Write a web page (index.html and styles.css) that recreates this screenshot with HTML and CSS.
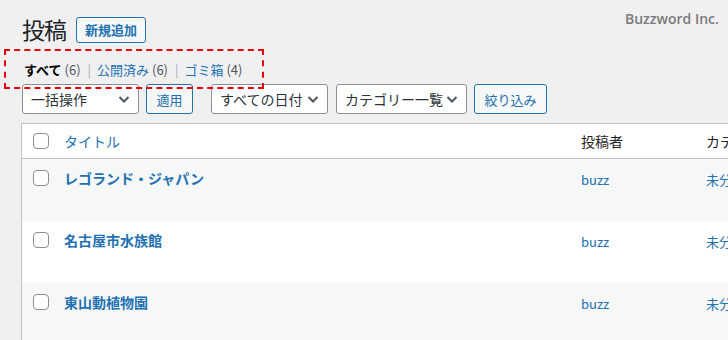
FILE: index.html
```html
<!DOCTYPE html>
<html lang="ja">
<head>
    <meta charset="UTF-8">
    <meta name="viewport" content="width=device-width, initial-scale=1.0">
    <title>投稿</title>
    <link rel="stylesheet" href="styles.css">
</head>
<body>
    <div class="wrap">
        <div class="brand">Buzzword Inc.</div>

        <div class="page-header">
            <h1>投稿</h1>
            <a class="btn btn-add" href="#">新規追加</a>
        </div>

        <ul class="subsubsub">
            <li><a class="current" href="#">すべて <span class="count">(6)</span></a><span class="sep">|</span></li>
            <li><a href="#">公開済み <span class="count">(6)</span></a><span class="sep">|</span></li>
            <li><a href="#">ゴミ箱 <span class="count">(4)</span></a></li>
        </ul>
        <div class="highlight"></div>

        <div class="tablenav">
            <div class="select sel-bulk">一括操作 <svg viewBox="0 0 16 16"><path d="M3.5 6 L8 10.5 L12.5 6"/></svg></div>
            <button class="btn btn-apply">適用</button>
            <div class="select sel-date">すべての日付 <svg viewBox="0 0 16 16"><path d="M3.5 6 L8 10.5 L12.5 6"/></svg></div>
            <div class="select sel-cat">カテゴリー一覧 <svg viewBox="0 0 16 16"><path d="M3.5 6 L8 10.5 L12.5 6"/></svg></div>
            <button class="btn btn-filter">絞り込み</button>
        </div>

        <table class="posts">
            <thead>
                <tr>
                    <th class="col-cb"><span class="checkbox"></span></th>
                    <th class="col-title"><a href="#">タイトル</a></th>
                    <th class="col-author">投稿者</th>
                    <th class="col-cat">カテゴリー</th>
                </tr>
            </thead>
            <tbody>
                <tr>
                    <td class="col-cb"><span class="checkbox"></span></td>
                    <td class="col-title"><a class="row-title" href="#">レゴランド・ジャパン</a></td>
                    <td class="col-author"><a href="#">buzz</a></td>
                    <td class="col-cat"><a href="#">未分類</a></td>
                </tr>
                <tr>
                    <td class="col-cb"><span class="checkbox"></span></td>
                    <td class="col-title"><a class="row-title" href="#">名古屋市水族館</a></td>
                    <td class="col-author"><a href="#">buzz</a></td>
                    <td class="col-cat"><a href="#">未分類</a></td>
                </tr>
                <tr>
                    <td class="col-cb"><span class="checkbox"></span></td>
                    <td class="col-title"><a class="row-title" href="#">東山動植物園</a></td>
                    <td class="col-author"><a href="#">buzz</a></td>
                    <td class="col-cat"><a href="#">未分類</a></td>
                </tr>
            </tbody>
        </table>
    </div>
</body>
</html>
```

FILE: styles.css
```css
body {
    margin: 0;
    background: #f0f0f1;
    color: #1d2327;
    font-family: "Noto Sans CJK JP", "Noto Sans", sans-serif;
    font-size: 13px;
    overflow: hidden;
}
a {
    color: #2271b1;
    text-decoration: none;
}
.wrap {
    position: relative;
    padding-left: 21px;
    width: 820px;
}
.brand {
    position: absolute;
    left: 625px;
    top: 9px;
    color: #7a7a7a;
    font-family: "Open Sans", sans-serif;
    font-size: 14px;
    font-weight: 600;
}
.page-header {
    display: flex;
    align-items: center;
    gap: 10px;
    padding-top: 16px;
    height: 27px;
}
.page-header h1 {
    margin: 0 0 0 1px;
    font-size: 23px;
    font-weight: 400;
    line-height: 27px;
    letter-spacing: -1px;
}
.btn {
    display: inline-flex;
    align-items: center;
    justify-content: center;
    box-sizing: border-box;
    height: 30px;
    padding: 0;
    border: 1px solid #2271b1;
    border-radius: 3px;
    background: #f6f7f7;
    color: #2271b1;
    font-family: inherit;
    font-size: 13px;
}
.btn-add {
    width: 70px;
    height: 26px;
    font-weight: 700;
}
.btn-apply { width: 47px; }
.btn-filter { width: 73px; }
.subsubsub {
    list-style: none;
    margin: 0;
    padding: 14px 0 0 3px;
    height: 29px;
    display: flex;
    color: #646970;
}
.subsubsub li {
    line-height: 26px;
}
.subsubsub a.current {
    color: #000;
    font-weight: 700;
}
.count {
    color: #50575e;
    font-weight: 400;
}
.sep {
    color: #a7aaad;
    margin: 0 6px 0 7px;
}
.highlight {
    position: absolute;
    left: 4px;
    top: 49px;
    width: 256px;
    height: 36px;
    border: 2px dashed #e8000b;
}
.tablenav {
    display: flex;
    align-items: center;
    height: 30px;
    margin-top: -2px;
    margin-left: 1px;
}
.select {
    display: flex;
    align-items: center;
    justify-content: space-between;
    box-sizing: border-box;
    height: 30px;
    padding: 0 6px 0 8px;
    border: 1px solid #8c8f94;
    border-radius: 3px;
    background: #fff;
    color: #2c3338;
    font-size: 14px;
    white-space: nowrap;
}
.select svg {
    width: 16px;
    height: 16px;
    fill: none;
    stroke: #50575e;
    stroke-width: 2;
}
.sel-bulk { width: 117px; margin-right: 7px; }
.sel-date { width: 117px; margin-left: 18px; margin-right: 8px; }
.sel-cat { width: 131px; margin-right: 7px; }
.posts {
    margin-top: 9px;
    width: 790px;
    table-layout: fixed;
    border-collapse: collapse;
    border: 1px solid #c3c4c7;
    background: #fff;
    white-space: nowrap;
}
.posts th, .posts td {
    text-align: left;
    vertical-align: top;
    padding: 0 8px;
    overflow: hidden;
}
.posts thead th {
    height: 34px;
    vertical-align: middle;
    font-size: 14px;
    font-weight: 400;
    border-bottom: 1px solid #c3c4c7;
}
.posts tbody td {
    height: 62px;
    box-sizing: border-box;
    padding-top: 9px;
    font-size: 13px;
}
.posts tbody tr:nth-child(odd) {
    background: #f6f7f7;
}
.posts .col-cb {
    width: 23px;
    padding-left: 11px;
    padding-right: 0;
}
.posts tbody .col-cb {
    padding-top: 11px;
}
.checkbox {
    display: block;
    width: 16px;
    height: 16px;
    box-sizing: border-box;
    border: 1px solid #8c8f94;
    border-radius: 4px;
    background: #fff;
}
.col-title {
    width: 501px;
}
.row-title {
    font-size: 14px;
    font-weight: 700;
}
.col-author {
    width: 109px;
}
.posts tbody .col-author, .posts tbody .col-cat {
    padding-top: 11px;
}
```
